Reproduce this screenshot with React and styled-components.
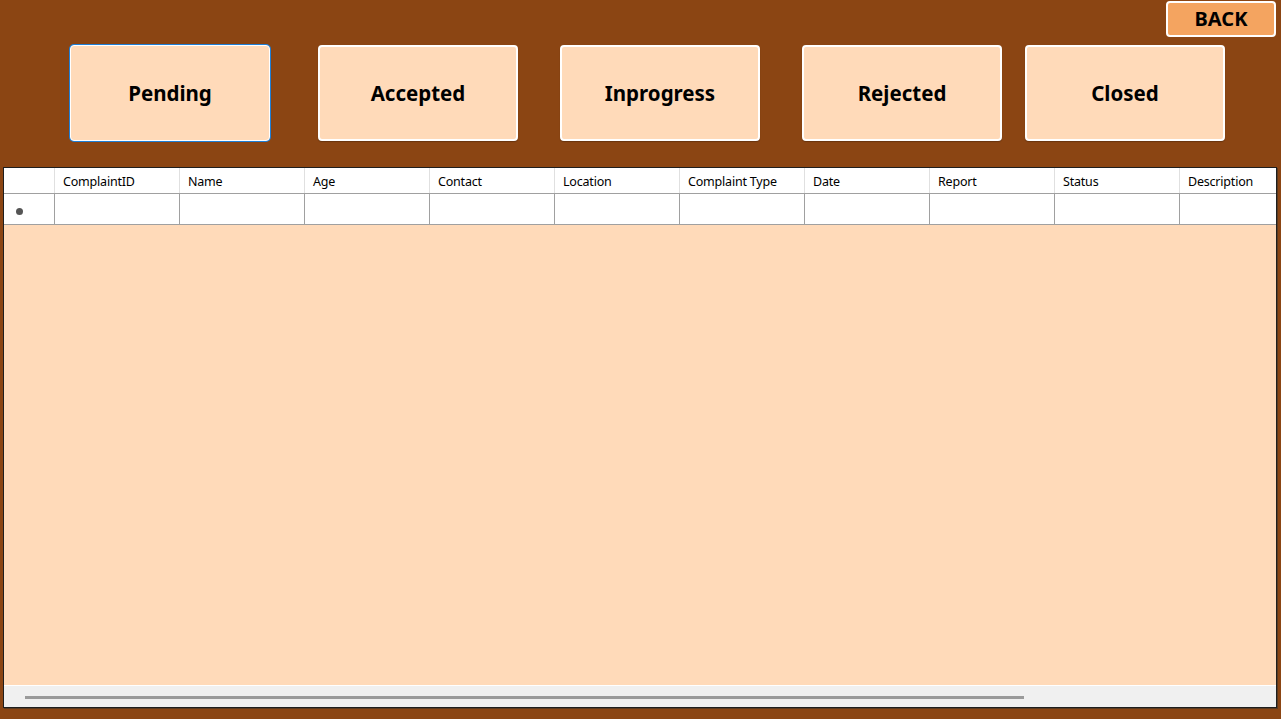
import React from "react";
import styled, { createGlobalStyle } from "styled-components";

const GlobalStyle = createGlobalStyle`
  html, body {
    margin: 0;
    padding: 0;
    background: #8b4513;
  }
  body {
    font-family: "Noto Sans", "Liberation Sans", sans-serif;
  }
`;

const columns = [
    "ComplaintID",
    "Name",
    "Age",
    "Contact",
    "Location",
    "Complaint Type",
    "Date",
    "Report",
    "Status",
    "Description",
];

// left gap of each filter button (they are not evenly spaced)
const filters = [
    { label: "Pending", offset: 70, focused: true },
    { label: "Accepted", offset: 48 },
    { label: "Inprogress", offset: 42 },
    { label: "Rejected", offset: 42 },
    { label: "Closed", offset: 23 },
];

const App = () => {
    return (
        <>
            <GlobalStyle />
            <Page>
                <TopBar>
                    <BackButton>BACK</BackButton>
                </TopBar>
                <FilterRow>
                    {filters.map((f) => (
                        <FilterButton key={f.label} $offset={f.offset} $focused={f.focused}>
                            {f.label}
                        </FilterButton>
                    ))}
                </FilterRow>
                <Grid>
                    <GridRows>
                        <HeaderRow>
                            <HeaderCorner />
                            {columns.map((c) => (
                                <HeaderCell key={c}>{c}</HeaderCell>
                            ))}
                        </HeaderRow>
                        <DataRow>
                            <RowHeader>
                                <Star />
                            </RowHeader>
                            {columns.map((c) => (
                                <DataCell key={c} />
                            ))}
                        </DataRow>
                    </GridRows>
                    <Empty />
                    <ScrollBar>
                        <Thumb />
                    </ScrollBar>
                </Grid>
            </Page>
        </>
    );
};

const Page = styled.div`
  width: 1281px;
  height: 719px;
  overflow: hidden;
  display: flex;
  flex-direction: column;
`;

const TopBar = styled.div`
  display: flex;
  justify-content: flex-end;
  padding: 1px 5px 0 0;
  height: 36px;
`;

const BackButton = styled.button`
  width: 110px;
  height: 36px;
  box-sizing: border-box;
  border: 2px solid #fff;
  border-radius: 4px;
  background: #f4a460;
  font-family: "Noto Sans", "Liberation Sans", sans-serif;
  font-weight: 700;
  font-size: 20px;
  color: #000;
  padding: 0;
  line-height: 30px;
`;

const FilterRow = styled.div`
  display: flex;
  margin-top: 8px;
  height: 96px;
`;

const FilterButton = styled.button`
  margin-left: ${(p) => p.$offset}px;
  flex: 0 0 200px;
  height: 96px;
  box-sizing: border-box;
  border: 2px solid #fff;
  border-radius: 4px;
  background: #ffdab9;
  font-family: "Noto Sans", "Liberation Sans", sans-serif;
  font-weight: 700;
  font-size: 20.5px;
  color: #000;
  padding: 0;
  box-shadow: ${(p) =>
    p.$focused ? "0 0 0 1px #1f7fd6" : "0 1px 1px rgba(0,0,0,0.25)"};
  ${(p) => p.$focused && "border-width: 1px; outline: none;"}
`;

const Grid = styled.div`
  margin: 26px 4px 0 3px;
  height: 541px;
  box-sizing: border-box;
  border: 1px solid #1e1e1e;
  box-shadow: 1px 1px 0 #5a3a20;
  background: #ffdab9;
  display: flex;
  flex-direction: column;
  overflow: hidden;
`;

const GridRows = styled.div`
  display: flex;
  flex-direction: column;
  font-family: "Noto Sans", "Liberation Sans", sans-serif;
  font-size: 12.5px;
  color: #000;
`;

const HeaderRow = styled.div`
  display: grid;
  grid-template-columns: 51px repeat(10, 125px);
  height: 26px;
  background: #fff;
  border-bottom: 1px solid #a0a0a0;
  box-sizing: border-box;
`;

const HeaderCorner = styled.div`
  border-right: 1px solid #e0e0e0;
`;

const HeaderCell = styled.div`
  border-right: 1px solid #e0e0e0;
  padding: 5px 0 0 8px;
  white-space: nowrap;
  letter-spacing: -0.2px;
`;

const DataRow = styled.div`
  display: grid;
  grid-template-columns: 51px repeat(10, 125px);
  height: 31px;
  background: #fff;
  border-bottom: 1px solid #a0a0a0;
  box-sizing: border-box;
`;

const RowHeader = styled.div`
  border-right: 1px solid #a0a0a0;
  display: flex;
  align-items: center;
  padding: 4px 0 0 12px;
`;

const Star = styled.span`
  width: 7px;
  height: 7px;
  border-radius: 50%;
  background: #555;
`;

const DataCell = styled.div`
  border-right: 1px solid #a0a0a0;
`;

const Empty = styled.div`
  flex: 1;
`;

const ScrollBar = styled.div`
  height: 21px;
  border-top: 1px solid #fff;
  background: #f0f0f0;
  display: flex;
  align-items: center;
  padding-left: 21px;
`;

const Thumb = styled.div`
  width: 999px;
  height: 3px;
  background: #9a9a9a;
  margin-top: 1px;
`;

export default App;
